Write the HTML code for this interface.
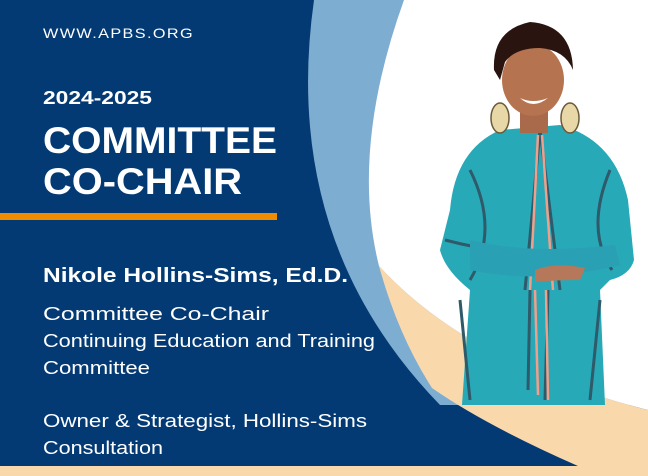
<!DOCTYPE html>
<html><head><meta charset="utf-8"><style>
html,body{margin:0;padding:0;width:648px;height:476px;overflow:hidden;background:#033a74}
svg{display:block}
text{font-family:"Liberation Sans",sans-serif;fill:#fff}
</style></head><body>
<svg width="648" height="476" viewBox="0 0 648 476">
<rect width="648" height="476" fill="#033a74"/>
<path d="M314,0 Q280,240 440,405 L648,405 L648,0Z" fill="#7eadd2"/>
<path d="M404,0 Q350,150 379,266 Q470,365 648,410 L648,0Z" fill="#ffffff"/>
<path d="M379,266 Q470,365 648,410 L648,476 L578,466 Q485,425 432,388 Q398,335 379,266Z" fill="#f9d8ac"/>
<rect x="0" y="466" width="648" height="10" fill="#f9d8ac"/>
<!-- person -->
<path d="M450,210 Q455,150 500,130 L560,125 Q615,140 628,200 L634,260 Q630,275 610,280 L600,290 L605,405 L462,405 L470,290 Q445,270 440,250Z" fill="#27a9b8"/>
<path d="M540,130 L525,290 M540,130 L560,290 M548,290 L545,400 M530,290 L528,390 M470,170 Q500,230 470,280 M610,170 Q585,230 612,270 M445,240 Q520,260 600,250 M460,300 L470,400 M600,300 L590,400" stroke="#2f5a6a" stroke-width="3" fill="none"/>
<path d="M538,135 L530,290 M542,135 L553,290 M535,290 L538,395 M546,290 L548,400" stroke="#f0a08a" stroke-width="2.5" fill="none"/>
<path d="M470,240 Q530,255 615,245 L620,265 Q540,285 470,270Z" fill="#2aa0b4"/>
<path d="M535,270 Q555,262 585,268 L580,280 Q555,280 535,282Z" fill="#b5785a"/>
<rect x="520" y="105" width="28" height="28" fill="#a86a4a"/>
<ellipse cx="533" cy="80" rx="31" ry="36" fill="#b57350"/>
<path d="M494,70 Q492,30 530,22 Q572,25 573,70 Q565,50 540,48 Q515,48 505,62 L500,80Z" fill="#2a1410"/>
<path d="M520,98 Q533,110 548,98 Q533,104 520,98Z" fill="#fff"/>
<ellipse cx="500" cy="118" rx="9" ry="15" fill="#e8d8a8" stroke="#6b5a3a" stroke-width="1.5"/>
<ellipse cx="570" cy="118" rx="9" ry="15" fill="#e8d8a8" stroke="#6b5a3a" stroke-width="1.5"/>
<!-- text -->
<text x="43" y="38" font-size="14" letter-spacing="1.2" textLength="151" lengthAdjust="spacingAndGlyphs">WWW.APBS.ORG</text>
<text x="43" y="104" font-size="18" font-weight="bold" textLength="109" lengthAdjust="spacingAndGlyphs">2024-2025</text>
<text x="43" y="153" font-size="37" font-weight="bold" textLength="234" lengthAdjust="spacingAndGlyphs">COMMITTEE</text>
<text x="43" y="194" font-size="37" font-weight="bold" textLength="199" lengthAdjust="spacingAndGlyphs">CO-CHAIR</text>
<rect x="0" y="213" width="277" height="7" fill="#f08c00"/>
<text x="43" y="282" font-size="20" font-weight="bold" textLength="305" lengthAdjust="spacingAndGlyphs">Nikole Hollins-Sims, Ed.D.</text>
<text x="43" y="320" font-size="18" textLength="226" lengthAdjust="spacingAndGlyphs">Committee Co-Chair</text>
<text x="43" y="347" font-size="18" textLength="332" lengthAdjust="spacingAndGlyphs">Continuing Education and Training</text>
<text x="43" y="374" font-size="18" textLength="107" lengthAdjust="spacingAndGlyphs">Committee</text>
<text x="43" y="427" font-size="18" textLength="324" lengthAdjust="spacingAndGlyphs">Owner &amp; Strategist, Hollins-Sims</text>
<text x="43" y="454" font-size="18" textLength="120" lengthAdjust="spacingAndGlyphs">Consultation</text>
</svg>
</body></html>
